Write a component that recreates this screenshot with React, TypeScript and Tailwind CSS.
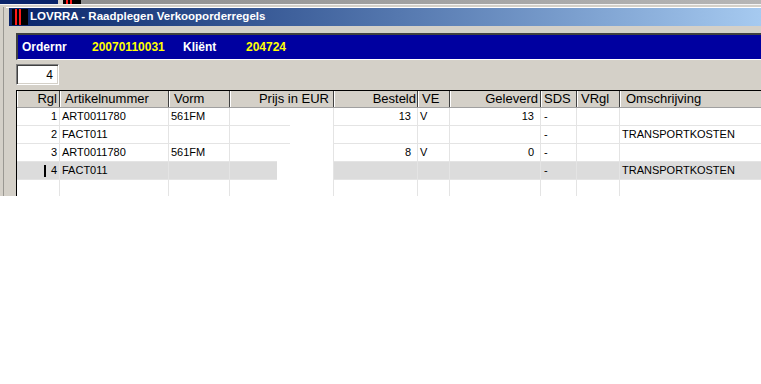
import React from "react";

type Col = {
  label: string;
  w: string;
  head: string;
  cell: string;
};

const cols: Col[] = [
  { label: "Rgl", w: "w-[43px]", head: "justify-end pr-[2px]", cell: "justify-end pr-[2px]" },
  { label: "Artikelnummer", w: "w-[109px]", head: "pl-[4px]", cell: "pl-[2px]" },
  { label: "Vorm", w: "w-[61px]", head: "pl-[4px]", cell: "pl-[2px]" },
  { label: "Prijs in EUR", w: "w-[104px]", head: "justify-end pr-[4px]", cell: "justify-end pr-[6px]" },
  { label: "Besteld", w: "w-[84px]", head: "justify-end pr-[1px]", cell: "justify-end pr-[6px]" },
  { label: "VE", w: "w-[32px]", head: "pl-[3px]", cell: "pl-[2px]" },
  { label: "Geleverd", w: "w-[91px]", head: "justify-end pr-[2px]", cell: "justify-end pr-[6px]" },
  { label: "SDS", w: "w-[36px]", head: "pl-[2px]", cell: "pl-[3px]" },
  { label: "VRgl", w: "w-[43px]", head: "pl-[3px]", cell: "pl-[2px]" },
  { label: "Omschrijving", w: "w-[160px]", head: "pl-[5px]", cell: "pl-[2px]" },
];

const rows: string[][] = [
  ["1", "ART0011780", "561FM", "", "13", "V", "13", "-", "", ""],
  ["2", "FACT011", "", "", "", "", "", "-", "", "TRANSPORTKOSTEN"],
  ["3", "ART0011780", "561FM", "", "8", "V", "0", "-", "", ""],
  ["4", "FACT011", "", "", "", "", "", "-", "", "TRANSPORTKOSTEN"],
  ["", "", "", "", "", "", "", "", "", ""],
];

function Grid() {
  return (
    <div className="relative mt-[5px] border-t border-l border-black bg-white">
      {/* header */}
      <div className="flex h-[17px] bg-[#d4d0c8] border-b border-b-[#a0a0a0]">
        {cols.map((c) => (
          <div
            key={c.label}
            className={`${c.w} shrink-0 flex items-center overflow-hidden whitespace-nowrap border-r border-r-[#404040] border-l border-l-white text-[13px] text-black ${c.head}`}
          >
            {c.label}
          </div>
        ))}
      </div>

      {/* rows */}
      {rows.map((r, i) => (
        <div
          key={i}
          className={`flex h-[18px] border-b border-b-[#e4e4e4] ${i === 3 ? "bg-[#dcdcdc]" : "bg-white"}`}
        >
          {cols.map((c, j) => (
            <div
              key={j}
              className={`${c.w} shrink-0 flex items-center overflow-hidden whitespace-nowrap border-r border-r-[#e4e4e4] text-[11px] text-black ${c.cell}`}
            >
              {i === 3 && j === 0 && (
                <span className="w-[2px] h-[12px] bg-black mr-[5px]" />
              )}
              {r[j]}
            </div>
          ))}
        </div>
      ))}

      {/* white redaction patches over the price column */}
      <div className="absolute left-[273px] top-[17px] w-[43px] h-[37px] bg-white" />
      <div className="absolute left-[260px] top-[54px] w-[56px] h-[36px] bg-white" />
    </div>
  );
}

export default function App() {
  return (
    <div className="w-[761px] h-[384px] overflow-hidden bg-white font-['Liberation_Sans',Arial,sans-serif]">
      <div className="h-[196px] bg-[#d4d0c8] flex flex-col overflow-hidden">
        {/* strip of the window behind */}
        <div className="h-[4px] flex shrink-0">
          <div className="w-[58px] bg-[#0a246a]" />
          <div className="w-[5px] bg-[#d4d0c8]" />
          <div className="w-[18px] bg-black flex gap-[2px] pl-[3px]">
            <span className="w-[2px] h-full bg-[#ff1a1a]" />
            <span className="w-[2px] h-full bg-[#ff1a1a]" />
          </div>
          <div className="flex-1 bg-gradient-to-r from-[#8e8e8e] to-[#b6b6b6]" />
        </div>
        <div className="h-[1px] bg-[#f4f4f4] shrink-0" />
        <div className="h-[2px] shrink-0" />

        <div className="flex flex-1 min-h-0">
          <div className="w-[3px] shrink-0" />
          <div className="w-[1px] shrink-0 bg-[#9a9892]" />
          <div className="flex-1 flex flex-col min-w-0">
            <div className="h-[1px] ml-[2px] bg-white shrink-0" />
            {/* title bar */}
            <div className="h-[18px] ml-[5px] shrink-0 flex items-center bg-gradient-to-r from-[#0a246a] to-[#a6caf0]">
              <div className="ml-[3px] w-[16px] h-[16px] bg-black flex gap-[2px] pl-[3px]">
                <span className="w-[2px] h-full bg-[#ff1a1a]" />
                <span className="w-[2px] h-full bg-[#ff1a1a]" />
              </div>
              <span className="ml-[2px] text-white font-bold text-[11.5px] whitespace-nowrap">
                LOVRRA - Raadplegen Verkooporderregels
              </span>
            </div>

            <div className="flex-1 flex flex-col pl-[12px] pt-[7px] min-h-0">
              {/* order header */}
              <div className="h-[27px] shrink-0 flex items-center bg-[#0000a0] border-t-2 border-t-[#404040] border-l-2 border-l-[#404040] border-b border-b-white pl-[4px] text-[12px] font-bold whitespace-nowrap">
                <span className="w-[70px] text-white">Ordernr</span>
                <span className="w-[91px] text-[#ffff00]">20070110031</span>
                <span className="w-[63px] text-white">Kliënt</span>
                <span className="text-[#ffff00]">204724</span>
              </div>

              {/* count box */}
              <div className="mt-[4px] w-[43px] h-[21px] shrink-0 flex items-center justify-end pr-[5px] bg-white border border-t-[#808080] border-l-[#808080] border-b-white border-r-white shadow-[inset_1px_1px_0_#404040,inset_-1px_-1px_0_#d4d0c8] text-[12px] text-black">
                4
              </div>

              <Grid />
            </div>
          </div>
        </div>
      </div>
    </div>
  );
}
